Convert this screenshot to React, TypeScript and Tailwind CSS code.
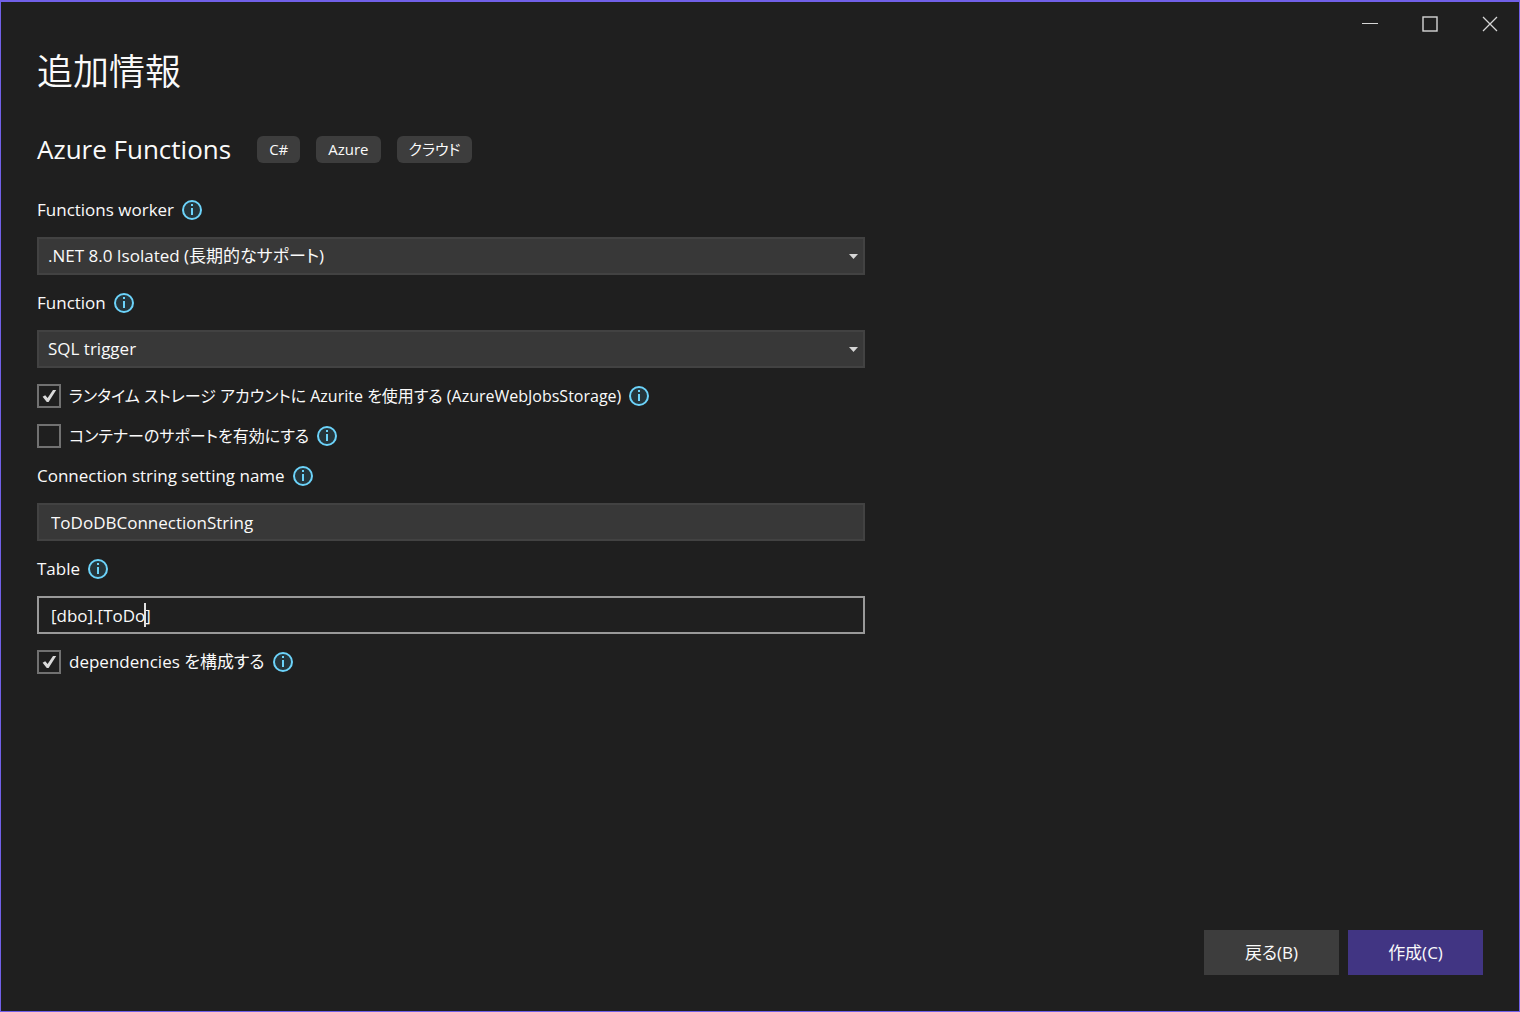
import { useState } from 'react';
import type { ReactNode } from 'react';

function InfoIcon() {
  return (
    <svg width="20" height="20" viewBox="0 0 20 20" fill="none" className="shrink-0" aria-hidden="true">
      <circle cx="10" cy="10" r="9" fill="#25353B" stroke="#6CD3FA" strokeWidth="2" />
      <rect x="9" y="4" width="2" height="2" fill="#6CD3FA" />
      <rect x="9" y="8" width="2" height="7" fill="#6CD3FA" />
    </svg>
  );
}

function FieldLabel({ htmlFor, children }: { htmlFor: string; children: ReactNode }) {
  return (
    <div className="flex h-6 items-center gap-2">
      <label htmlFor={htmlFor}>{children}</label>
      <InfoIcon />
    </div>
  );
}

function SelectField({ id, label, options }: { id: string; label: string; options: string[] }) {
  return (
    <div className="flex flex-col gap-[15px]">
      <FieldLabel htmlFor={id}>{label}</FieldLabel>
      <div className="relative">
        <select
          id={id}
          className="h-[38px] w-full appearance-none border-2 border-[#424242] bg-[#383838] pl-[9px] pr-8 focus:outline-none"
        >
          {options.map((option) => (
            <option key={option}>{option}</option>
          ))}
        </select>
        <svg
          width="9"
          height="5"
          viewBox="0 0 9 5"
          className="pointer-events-none absolute right-[7px] top-[17px]"
          aria-hidden="true"
        >
          <path d="M0 0h9L4.5 5z" fill="#D6D6D6" />
        </svg>
      </div>
    </div>
  );
}

interface CheckFieldProps {
  id: string;
  label: string;
  defaultChecked?: boolean;
  compact?: boolean;
}

function CheckField({ id, label, defaultChecked = false, compact = false }: CheckFieldProps) {
  return (
    <div className="flex h-6 items-center gap-2">
      <div className="relative h-6 w-6 shrink-0">
        <input
          id={id}
          type="checkbox"
          defaultChecked={defaultChecked}
          className="peer block h-6 w-6 appearance-none border-2 border-[#717171] bg-[#1F1F1F]"
        />
        <svg
          width="24"
          height="24"
          viewBox="0 0 24 24"
          className="pointer-events-none absolute inset-0 hidden peer-checked:block"
          aria-hidden="true"
        >
          <path d="M5.6 12.8L8.2 11.2l2.4 2.8L16 6h3.2l-7.6 12h-1.8z" fill="#DADADA" />
        </svg>
      </div>
      <label htmlFor={id} className={compact ? 'text-base' : 'text-[17px]'}>
        {label}
      </label>
      <InfoIcon />
    </div>
  );
}

function TitleBar() {
  return (
    <header className="-mr-px flex h-11 justify-end">
      <button aria-label="最小化" className="flex w-[60px] items-center justify-center">
        <svg width="16" height="16" viewBox="0 0 16 16" fill="none" stroke="#D6D6D6">
          <path d="M0 7.5h16" />
        </svg>
      </button>
      <button aria-label="最大化" className="flex w-[60px] items-center justify-center">
        <svg width="16" height="16" viewBox="0 0 16 16" fill="none" stroke="#D6D6D6" strokeWidth="1.4">
          <rect x="1" y="1" width="14" height="14" />
        </svg>
      </button>
      <button aria-label="閉じる" className="flex w-[60px] items-center justify-center">
        <svg width="16" height="16" viewBox="0 0 16 16" fill="none" stroke="#D6D6D6" strokeWidth="1.3">
          <path d="M1 1l14 14M15 1L1 15" />
        </svg>
      </button>
    </header>
  );
}

function App() {
  const [connection, setConnection] = useState('ToDoDBConnectionString');
  const [table, setTable] = useState('[dbo].[ToDo]');

  const tags = ['C#', 'Azure', 'クラウド'];

  return (
    <div className="flex min-h-screen flex-col border border-t-2 border-[#7160E8] bg-[#1F1F1F] font-['Open_Sans','Noto_Sans_CJK_JP',sans-serif] text-[17px] leading-6 text-[#FAFAFA] [font-feature-settings:'palt']">
      <TitleBar />

      <main className="flex flex-1 flex-col px-9 pb-9">
        <h1 className="text-4xl leading-[52px] font-[350]">追加情報</h1>

        {/* Template name and tags */}
        <div className="mt-[33px] flex h-9 items-center gap-[26px]">
          <h2 className="text-[26px] leading-9">Azure Functions</h2>
          <ul className="flex gap-4">
            {tags.map((tag) => (
              <li key={tag} className="h-[27px] rounded-md bg-[#3D3D3D] px-3 text-[15px] leading-[27px]">
                {tag}
              </li>
            ))}
          </ul>
        </div>

        {/* Settings */}
        <form className="mt-[31px] flex w-full max-w-[828px] flex-col gap-4">
          <SelectField id="worker" label="Functions worker" options={['.NET 8.0 Isolated (長期的なサポート)']} />
          <SelectField id="function" label="Function" options={['SQL trigger']} />
          <CheckField
            id="azurite"
            label="ランタイム ストレージ アカウントに Azurite を使用する (AzureWebJobsStorage)"
            defaultChecked
            compact
          />
          <CheckField id="container" label="コンテナーのサポートを有効にする" compact />

          <div className="flex flex-col gap-[15px]">
            <FieldLabel htmlFor="connection">Connection string setting name</FieldLabel>
            <input
              id="connection"
              type="text"
              value={connection}
              onChange={(e) => setConnection(e.target.value)}
              className="h-[38px] w-full border-2 border-[#424242] bg-[#383838] px-3 focus:outline-none"
            />
          </div>

          <div className="flex flex-col gap-[15px]">
            <FieldLabel htmlFor="table">Table</FieldLabel>
            <div className="relative">
              <input
                id="table"
                type="text"
                value={table}
                onChange={(e) => setTable(e.target.value)}
                className="block h-[38px] w-full border-2 border-[#999999] bg-[#1F1F1F] px-3 caret-transparent focus:outline-none"
              />
              <span className="pointer-events-none absolute left-[107px] top-[7px] h-6 w-0.5 bg-[#E0E0E0]" />
            </div>
          </div>

          <CheckField id="dependencies" label="dependencies を構成する" defaultChecked />
        </form>

        {/* Actions */}
        <div className="mt-auto flex justify-end gap-[9px]">
          <button className="h-[45px] w-[135px] bg-[#3D3D3D]">戻る(B)</button>
          <button className="h-[45px] w-[135px] bg-[#413583]">作成(C)</button>
        </div>
      </main>
    </div>
  );
}

export default App;
